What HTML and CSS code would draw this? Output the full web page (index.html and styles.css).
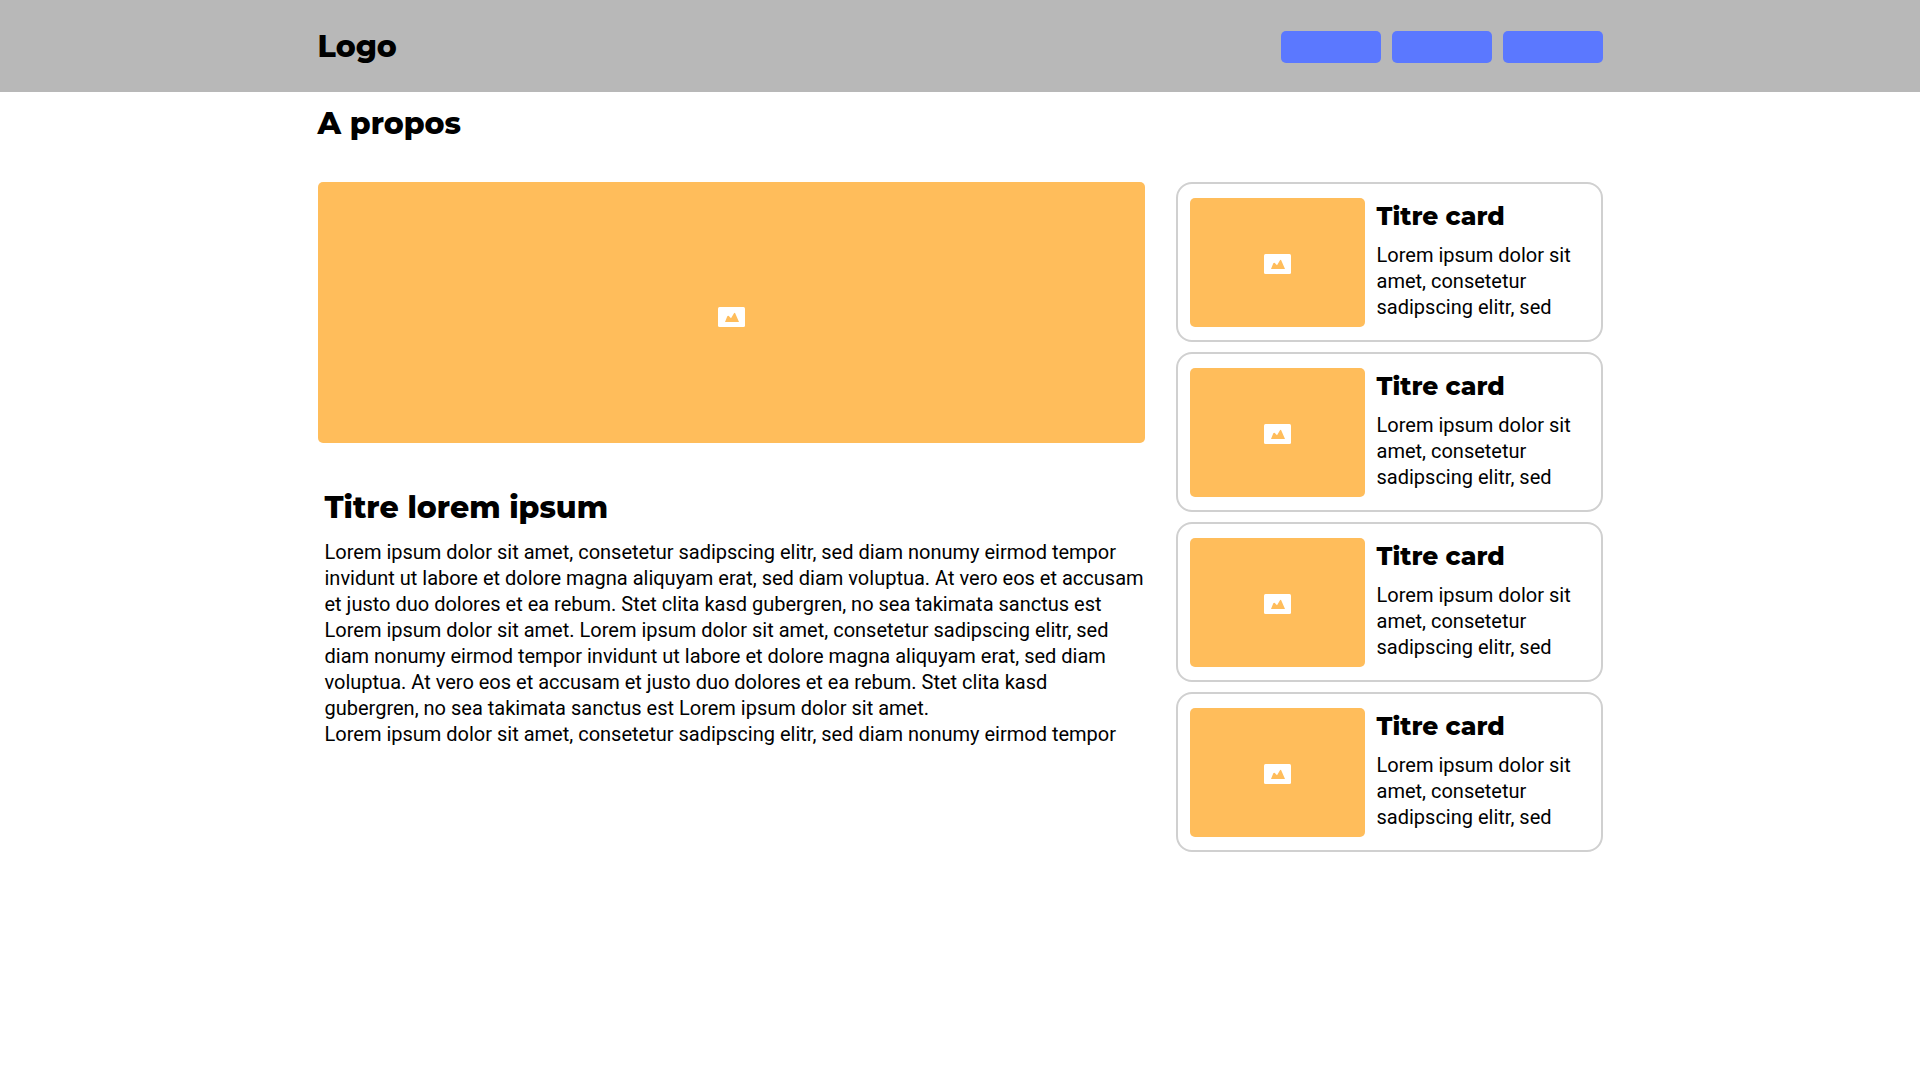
FILE: index.html
```html
<!DOCTYPE html>
<html lang="fr">
<head>
<meta charset="utf-8">
<meta name="viewport" content="width=device-width, initial-scale=1">
<title>A propos</title>
<link rel="stylesheet" href="styles.css">
</head>
<body>
<svg class="sprite" aria-hidden="true">
  <symbol id="picture" viewBox="0 0 27 20">
    <rect width="27" height="20" rx="1.5" fill="#fff"/>
    <path d="M7 15 L9.3 9.3 Q10 8.3 10.8 9 L13 11.3 L16 6.3 Q16.6 5.4 17.2 6.3 L21 15 Z" fill="#ffbd5b"/>
  </symbol>
</svg>
<header class="site-header">
  <div class="container header-row">
    <a class="logo" href="#">Logo</a>
    <nav class="nav">
      <button class="nav-button" type="button"></button>
      <button class="nav-button" type="button"></button>
      <button class="nav-button" type="button"></button>
    </nav>
  </div>
</header>
<main class="container">
  <h1 class="title">A propos</h1>
  <div class="columns">
    <article>
      <div class="picture hero"><svg class="icon"><use href="#picture"/></svg></div>
      <div class="story">
        <h2 class="title">Titre lorem ipsum</h2>
        <p class="text">Lorem ipsum dolor sit amet, consetetur sadipscing elitr, sed diam nonumy eirmod tempor invidunt ut labore et dolore magna aliquyam erat, sed diam voluptua. At vero eos et accusam et justo duo dolores et ea rebum. Stet clita kasd gubergren, no sea takimata sanctus est Lorem ipsum dolor sit amet. Lorem ipsum dolor sit amet, consetetur sadipscing elitr, sed diam nonumy eirmod tempor invidunt ut labore et dolore magna aliquyam erat, sed diam voluptua. At vero eos et accusam et justo duo dolores et ea rebum. Stet clita kasd gubergren, no sea takimata sanctus est Lorem ipsum dolor sit amet.<br>Lorem ipsum dolor sit amet, consetetur sadipscing elitr, sed diam nonumy eirmod tempor</p>
      </div>
    </article>
    <aside class="cards">
      <section class="card">
        <div class="picture thumb"><svg class="icon"><use href="#picture"/></svg></div>
        <div class="card-body"><h3 class="card-title">Titre card</h3><p class="text">Lorem ipsum dolor sit amet, consetetur sadipscing elitr, sed</p></div>
      </section>
      <section class="card">
        <div class="picture thumb"><svg class="icon"><use href="#picture"/></svg></div>
        <div class="card-body"><h3 class="card-title">Titre card</h3><p class="text">Lorem ipsum dolor sit amet, consetetur sadipscing elitr, sed</p></div>
      </section>
      <section class="card">
        <div class="picture thumb"><svg class="icon"><use href="#picture"/></svg></div>
        <div class="card-body"><h3 class="card-title">Titre card</h3><p class="text">Lorem ipsum dolor sit amet, consetetur sadipscing elitr, sed</p></div>
      </section>
      <section class="card">
        <div class="picture thumb"><svg class="icon"><use href="#picture"/></svg></div>
        <div class="card-body"><h3 class="card-title">Titre card</h3><p class="text">Lorem ipsum dolor sit amet, consetetur sadipscing elitr, sed</p></div>
      </section>
    </aside>
  </div>
</main>
</body>
</html>
```
FILE: styles.css
```css
* { box-sizing: border-box; }
body { margin: 0; background: #fff; color: #000; font-family: Roboto, sans-serif; }
h1, h2, h3, p { margin: 0; }
.sprite { display: none; }
.container { max-width: 1285px; margin: 0 auto; }

.site-header { background: #b8b8b8; }
.header-row { display: flex; align-items: center; justify-content: space-between; min-height: 92px; padding-top: 2px; }
.logo, .title { font: 800 30px/40px Montserrat, Inter, sans-serif; }
.logo { color: #000; text-decoration: none; }
.nav { display: flex; gap: 11px; }
.nav-button { width: 100px; height: 32px; padding: 0; border: 0; border-radius: 5px; background: #5b78ff; cursor: pointer; }

main { padding: 12px 0 40px; }
.columns { display: grid; grid-template-columns: minmax(0, 1fr) 427px; gap: 31px; align-items: start; margin-top: 38px; }

.picture { display: flex; align-items: center; justify-content: center; border-radius: 5px; background: #ffbd5b; }
.icon { width: 27px; height: 20px; }
.hero { height: 261px; padding-top: 8px; }
.story { padding: 45px 0 0 7px; }
.story .text { margin-top: 11px; }
.text { font-size: 20px; line-height: 26px; }

.cards { display: grid; gap: 10px; }
.card { display: flex; gap: 12px; min-height: 160px; padding: 14px 12px 13px; border: 2px solid #d0d0d0; border-radius: 16px; }
.thumb { flex: none; width: 175px; height: 129px; padding-top: 3px; }
.card-body { flex: 1; min-width: 0; padding-top: 2px; }
.card-title { margin-bottom: 10px; font: 800 25px/32px Montserrat, Inter, sans-serif; }
```
